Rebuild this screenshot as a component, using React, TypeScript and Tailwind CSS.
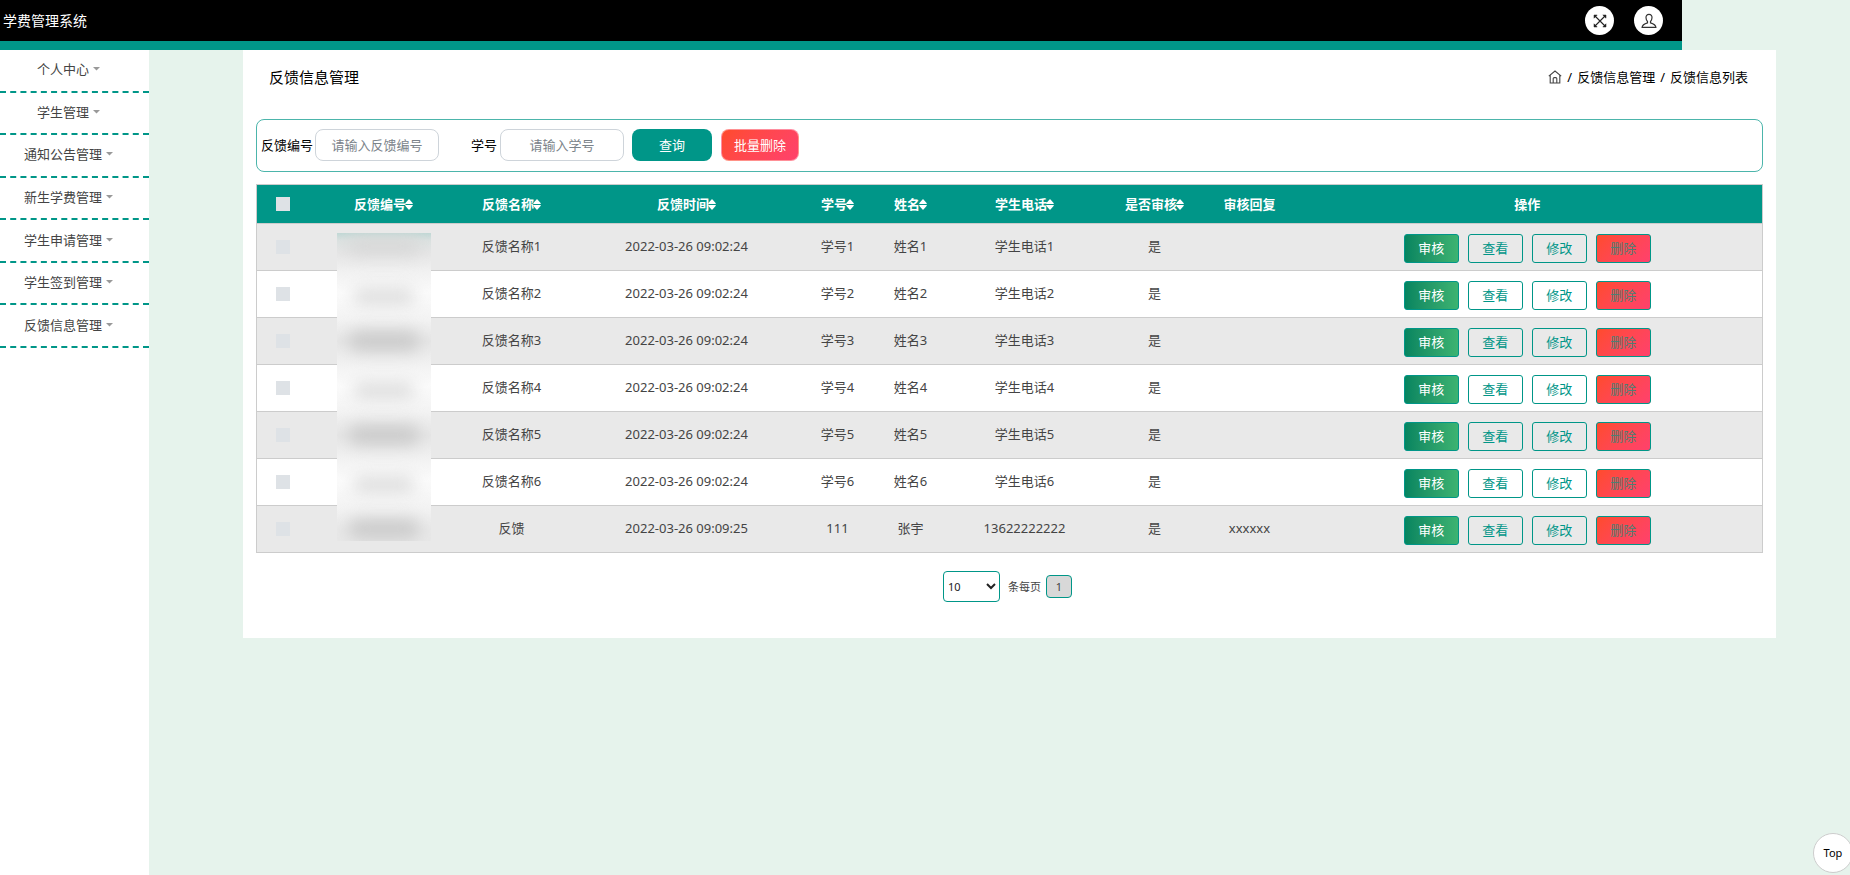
import React from 'react';

const menu = ['个人中心', '学生管理', '通知公告管理', '新生学费管理', '学生申请管理', '学生签到管理', '反馈信息管理'];

const columns = [
  { label: '反馈编号', width: 134, sortable: true },
  { label: '反馈名称', width: 122, sortable: true },
  { label: '反馈时间', width: 228, sortable: true },
  { label: '学号', width: 74, sortable: true },
  { label: '姓名', width: 72, sortable: true },
  { label: '学生电话', width: 156, sortable: true },
  { label: '是否审核', width: 104, sortable: true },
  { label: '审核回复', width: 86, sortable: false },
  { label: '操作', width: 470, sortable: false },
];

const rows = [
  ...[1, 2, 3, 4, 5, 6].map((n) => [`反馈名称${n}`, '2022-03-26 09:02:24', `学号${n}`, `姓名${n}`, `学生电话${n}`, '是', '']),
  ['反馈', '2022-03-26 09:09:25', '111', '张宇', '13622222222', '是', 'xxxxxx'],
];

const checkboxClass = 'block size-[14px] appearance-none bg-[#dee2e6] checked:bg-[#009688]';
const inputClass =
  'h-8 w-[124px] rounded-lg border border-[#ced4da] bg-white text-center text-[13px] text-[#495057] placeholder:text-[#7b838a] outline-none';
const actionClass = 'h-[29px] w-[55px] rounded-[3px] border border-[#009688] text-[13px] leading-none';

function SortIcon() {
  return (
    <svg viewBox="0 0 8 11" className="-ml-px h-[11px] w-2" fill="currentColor" aria-hidden="true">
      <path d="M4 0 L7.8 4.2 Q8 4.9 7.3 4.9 H0.7 Q0 4.9 0.2 4.2 Z" />
      <path d="M4 11 L7.8 6.8 Q8 6.1 7.3 6.1 H0.7 Q0 6.1 0.2 6.8 Z" />
    </svg>
  );
}

function ExpandIcon() {
  return (
    <svg viewBox="0 0 14 14" className="size-[14px]" fill="none" stroke="#222" strokeWidth="1.1" aria-hidden="true">
      <path d="M1.5 1.5 L12.5 12.5 M12.5 1.5 L1.5 12.5" />
      <path d="M1 4.2 V1 H4.2 Z M9.8 1 H13 V4.2 Z M13 9.8 V13 H9.8 Z M4.2 13 H1 V9.8 Z" fill="#222" strokeWidth="0.5" />
    </svg>
  );
}

function UserIcon() {
  return (
    <svg viewBox="0 0 16 16" className="size-4" fill="none" stroke="#333" strokeWidth="1.2" aria-hidden="true">
      <path d="M8 1.4 C5.9 1.4 4.9 2.8 5 4.8 C5.1 6.4 5.7 7.7 6.5 8.5 V9.8 C4 10.5 1.3 11.3 1.1 14.4 H14.9 C14.7 11.3 12 10.5 9.5 9.8 V8.5 C10.3 7.7 10.9 6.4 11 4.8 C11.1 2.8 10.1 1.4 8 1.4 Z" />
    </svg>
  );
}

function HomeIcon() {
  return (
    <svg viewBox="0 0 14 14" className="size-[14px]" fill="none" stroke="#444" strokeWidth="1.1" aria-hidden="true">
      <path d="M0.8 6.2 L7 1 L13.2 6.2 M2.2 5.2 V13 H11.8 V5.2" />
      <path d="M5.2 13 V8.6 Q5.2 7.6 6.2 7.6 H7.8 Q8.8 7.6 8.8 8.6 V13" />
    </svg>
  );
}

function RedactedIds() {
  return (
    <div
      aria-hidden="true"
      className="absolute top-[9px] left-5 h-[308px] w-[94px] overflow-hidden bg-[linear-gradient(to_bottom,#c0d8d5_0,#dce2e1_8px,#e6e6e6_20px,#f0f0f0_37px,#fbfbfb_60px,#f3f3f3_86px,#e6e6e6_108px,#f3f3f3_134px,#fbfbfb_154px,#f3f3f3_178px,#e6e6e6_202px,#f3f3f3_228px,#fbfbfb_248px,#f3f3f3_274px,#e8e8e8_296px)]"
    >
      <div className="flex flex-col items-center">
        {rows.map((row, i) => (
          <div key={row[0]} className="flex h-[47px] w-full justify-center pt-1">
            <span
              className={
                i === 0
                  ? 'h-[18px] w-[74px] rounded-full bg-[#d8d8d8] blur-[8px]'
                  : i % 2 === 0
                    ? 'h-[20px] w-[72px] rounded-full bg-[#cbcbcb] blur-[8px]'
                    : 'mt-1 h-[17px] w-[62px] rounded-full bg-[#dedede] blur-[8px]'
              }
            />
          </div>
        ))}
      </div>
    </div>
  );
}

export default function App() {
  return (
    <div className="flex min-h-screen flex-col bg-[#e6f3ec] font-['Noto_Sans','Noto_Sans_CJK_SC',sans-serif] text-[13px] leading-5 text-black">
      <header className="flex h-[50px] w-[90.92%] items-center justify-between border-b-[9px] border-[#009688] bg-black pr-[19px] pl-[3px]">
        <h1 className="text-sm text-white">学费管理系统</h1>
        <div className="flex gap-5">
          <button aria-label="全屏" className="flex size-[29px] items-center justify-center rounded-full bg-white">
            <ExpandIcon />
          </button>
          <button aria-label="用户" className="flex size-[29px] items-center justify-center rounded-full bg-white">
            <UserIcon />
          </button>
        </div>
      </header>

      <div className="flex grow items-stretch">
        <nav className="w-[149px] shrink-0 bg-white">
          <ul className="grid h-[298px] grid-rows-7">
            {menu.map((item) => (
              <li key={item} className="border-b-2 border-dashed border-[#009688]">
                <a href="#" className="flex h-full items-center justify-center gap-1 pr-3 pb-[2px] text-[#444]">
                  {item}
                  <svg viewBox="0 0 7 4" className="h-1 w-[7px]" fill="#999" aria-hidden="true">
                    <path d="M0 0 H7 L3.5 3.5 Z" />
                  </svg>
                </a>
              </li>
            ))}
          </ul>
        </nav>

        <main className="mr-[74px] ml-[94px] min-w-0 grow self-start bg-white px-[13px] pb-9">
          <div className="flex h-[69px] items-start justify-between pt-[17px] pr-[15px] pl-[13px]">
            <h2 className="text-[15px]">反馈信息管理</h2>
            <div className="flex items-center gap-[5px]">
              <a href="#" aria-label="首页">
                <HomeIcon />
              </a>
              <span>/</span>
              <a href="#">反馈信息管理</a>
              <span>/</span>
              <span>反馈信息列表</span>
            </div>
          </div>

          <form className="flex h-[53px] items-start rounded-lg border border-[#009688]/70 pt-[9px] pl-1 leading-8" onSubmit={(e) => e.preventDefault()}>
            <label htmlFor="feedback-no" className="mr-[2px]">反馈编号</label>
            <input id="feedback-no" className={inputClass} placeholder="请输入反馈编号" />
            <label htmlFor="student-no" className="mr-[3px] ml-8">学号</label>
            <input id="student-no" className={inputClass} placeholder="请输入学号" />
            <button className="ml-2 h-8 w-20 rounded-lg bg-[#009688] text-white">查询</button>
            <button type="button" className="ml-[9px] h-8 w-[78px] rounded-lg border border-white/40 bg-linear-135 from-[#ff4b2b] to-[#ff416c] leading-[30px] text-white">
              批量删除
            </button>
          </form>

          <table className="mt-3 w-full table-fixed border-collapse border border-[#ccc] text-center">
            <colgroup>
              <col style={{ width: 60 }} />
              {columns.map((c) => (
                <col key={c.label} style={{ width: c.width }} />
              ))}
            </colgroup>
            <thead>
              <tr className="h-[39px] bg-[#009688] text-white">
                <th className="pl-[19px]">
                  <input type="checkbox" aria-label="全选" className={checkboxClass} />
                </th>
                {columns.map((c) => (
                  <th key={c.label} className="font-bold">
                    <span className="flex items-center justify-center">
                      {c.label}
                      {c.sortable && <SortIcon />}
                    </span>
                  </th>
                ))}
              </tr>
            </thead>
            <tbody>
              {rows.map((row, i) => (
                <tr key={row[0]} className="h-[47px] border-t border-[#ccc] text-[#444] odd:bg-[#e9e9e9]">
                  <td className="pl-[19px]">
                    <input type="checkbox" aria-label={row[0]} className={checkboxClass} />
                  </td>
                  <td className="relative">{i === 0 && <RedactedIds />}</td>
                  {row.map((value, j) => (
                    <td key={j} className="pb-[2px]">{value}</td>
                  ))}
                  <td>
                    <div className="flex justify-center gap-[9px] pt-[3px]">
                      <button className={`${actionClass} bg-linear-to-r from-[#058560] to-[#3cb371] text-white`}>审核</button>
                      <button className={`${actionClass} text-[#009688]`}>查看</button>
                      <button className={`${actionClass} text-[#009688]`}>修改</button>
                      <button className={`${actionClass} bg-linear-135 from-[#ff4b2b] to-[#ff416c] text-[#4d7f74]`}>删除</button>
                    </div>
                  </td>
                </tr>
              ))}
            </tbody>
          </table>

          <div className="mt-[18px] flex items-center justify-center pr-1 text-[11px] text-[#444]">
            <select aria-label="条每页" className="h-[31px] w-[57px] rounded-[4px] border border-[#009688] bg-white text-[#222]">
              <option>10</option>
            </select>
            <span className="mr-[5px] ml-2">条每页</span>
            <button className="h-[23px] w-[26px] rounded-[4px] border border-[#009688] bg-[#d8d8d8]">1</button>
          </div>
        </main>
      </div>

      <button className="fixed right-[-3px] bottom-[2px] size-10 rounded-full border border-[#ccc] bg-white text-[11px]">Top</button>
    </div>
  );
}
